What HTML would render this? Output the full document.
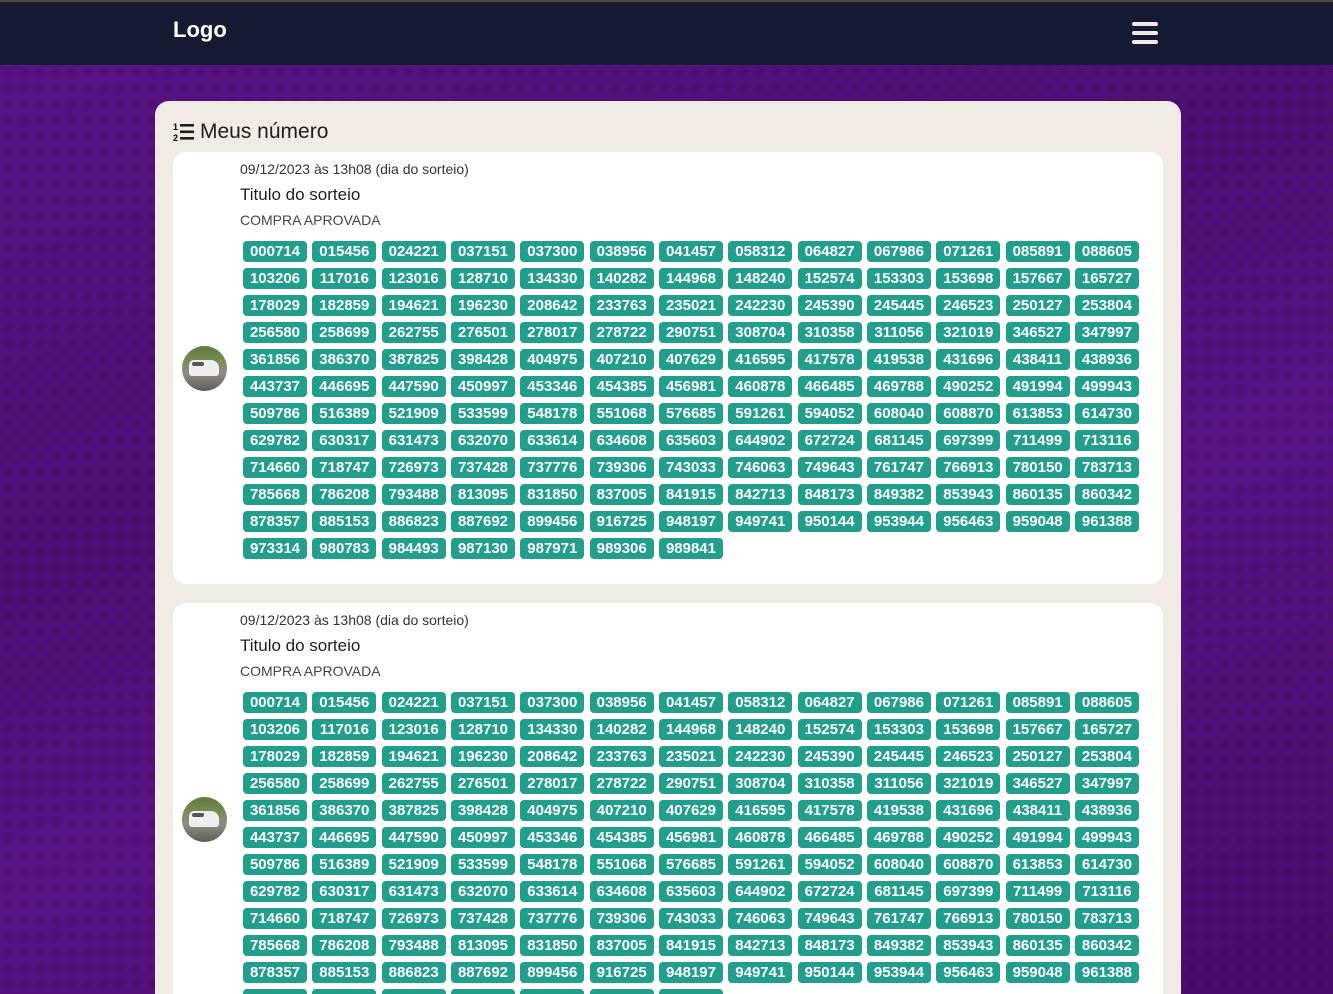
<!DOCTYPE html>
<html><head><meta charset="utf-8"><style>
*{box-sizing:border-box;margin:0;padding:0}
html,body{width:1333px;height:994px;overflow:hidden}
body{font-family:"Liberation Sans",sans-serif;background:#53107a;position:relative;
background-image:radial-gradient(circle,rgba(40,0,60,.14) 4px,transparent 5px),linear-gradient(160deg,#5a1385 0%,#4e0f74 40%,#5a1283 60%,#480c6a 100%);
background-size:16px 16px,100% 100%}
.top{position:absolute;left:0;top:0;width:1333px;height:2px;background:#4a4a4a}
nav{position:absolute;left:0;top:2px;width:1333px;height:63px;background:#161b33}
.logo{position:absolute;left:173px;top:15px;color:#fff;font-weight:bold;font-size:22px}
.burger{position:absolute;left:1132px;top:20px;width:26px}
.burger i{display:block;height:3.5px;background:#f0ebe5;border-radius:2px;margin-bottom:5.5px}
.main{position:absolute;left:155px;top:101px;width:1026px;height:1000px;background:#f0ebe5;border-radius:14px}
h2{position:absolute;left:18px;top:19px;font-weight:normal;font-size:21px;color:#1e1e1e;display:flex;align-items:center}
.card{position:absolute;left:18px;width:990px;height:432px;background:#fff;border-radius:13px}
.av{position:absolute;left:9px;top:194px;width:45px;height:45px;border-radius:50%;overflow:hidden;
background:linear-gradient(180deg,#5f7a3c 0%,#7c8c58 35%,#8d8d85 60%,#5e5e58 100%)}
.av b{position:absolute;left:7px;top:14px;width:30px;height:16px;background:#eee;border-radius:5px 8px 3px 3px}
.av s{position:absolute;left:10px;top:16px;width:12px;height:4px;background:#555;border-radius:2px}
.c{position:absolute;left:67px;top:8px}
.d{font-size:14px;line-height:18px;color:#333}
.t{font-size:17px;line-height:22px;color:#1e1e1e;margin-top:6px}
.s{font-size:14px;line-height:20px;color:#444;margin-top:4px}
.g{display:grid;grid-template-columns:repeat(13,64px);column-gap:5.33px;row-gap:6px;margin:11px 0 0 3px}
.g span{height:21px;background:#229e8d;color:#fff;border-radius:4px;font-weight:bold;font-size:15px;line-height:21px;text-align:center}
</style></head><body>
<div class="top"></div>
<nav><div class="logo">Logo</div><div class="burger"><i></i><i></i><i></i></div></nav>
<div class="main">
<h2><svg width="22" height="20" viewBox="0 0 22 20" style="margin-right:5px"><text x="0" y="8" font-size="9" font-weight="bold" font-family="Liberation Sans">1</text><text x="0" y="19" font-size="9" font-weight="bold" font-family="Liberation Sans">2</text><rect x="7" y="2" width="14" height="2.6" fill="#1e1e1e"/><rect x="7" y="8.5" width="14" height="2.6" fill="#1e1e1e"/><rect x="7" y="15" width="14" height="2.6" fill="#1e1e1e"/></svg>Meus número</h2>
<div class="card" style="top:51px">
<div class="av"><b></b><s></s></div>
<div class="c"><div class="d">09/12/2023 às 13h08 (dia do sorteio)</div><div class="t">Titulo do sorteio</div><div class="s">COMPRA APROVADA</div>
<div class="g"><span>000714</span><span>015456</span><span>024221</span><span>037151</span><span>037300</span><span>038956</span><span>041457</span><span>058312</span><span>064827</span><span>067986</span><span>071261</span><span>085891</span><span>088605</span><span>103206</span><span>117016</span><span>123016</span><span>128710</span><span>134330</span><span>140282</span><span>144968</span><span>148240</span><span>152574</span><span>153303</span><span>153698</span><span>157667</span><span>165727</span><span>178029</span><span>182859</span><span>194621</span><span>196230</span><span>208642</span><span>233763</span><span>235021</span><span>242230</span><span>245390</span><span>245445</span><span>246523</span><span>250127</span><span>253804</span><span>256580</span><span>258699</span><span>262755</span><span>276501</span><span>278017</span><span>278722</span><span>290751</span><span>308704</span><span>310358</span><span>311056</span><span>321019</span><span>346527</span><span>347997</span><span>361856</span><span>386370</span><span>387825</span><span>398428</span><span>404975</span><span>407210</span><span>407629</span><span>416595</span><span>417578</span><span>419538</span><span>431696</span><span>438411</span><span>438936</span><span>443737</span><span>446695</span><span>447590</span><span>450997</span><span>453346</span><span>454385</span><span>456981</span><span>460878</span><span>466485</span><span>469788</span><span>490252</span><span>491994</span><span>499943</span><span>509786</span><span>516389</span><span>521909</span><span>533599</span><span>548178</span><span>551068</span><span>576685</span><span>591261</span><span>594052</span><span>608040</span><span>608870</span><span>613853</span><span>614730</span><span>629782</span><span>630317</span><span>631473</span><span>632070</span><span>633614</span><span>634608</span><span>635603</span><span>644902</span><span>672724</span><span>681145</span><span>697399</span><span>711499</span><span>713116</span><span>714660</span><span>718747</span><span>726973</span><span>737428</span><span>737776</span><span>739306</span><span>743033</span><span>746063</span><span>749643</span><span>761747</span><span>766913</span><span>780150</span><span>783713</span><span>785668</span><span>786208</span><span>793488</span><span>813095</span><span>831850</span><span>837005</span><span>841915</span><span>842713</span><span>848173</span><span>849382</span><span>853943</span><span>860135</span><span>860342</span><span>878357</span><span>885153</span><span>886823</span><span>887692</span><span>899456</span><span>916725</span><span>948197</span><span>949741</span><span>950144</span><span>953944</span><span>956463</span><span>959048</span><span>961388</span><span>973314</span><span>980783</span><span>984493</span><span>987130</span><span>987971</span><span>989306</span><span>989841</span></div></div>
</div>
<div class="card" style="top:502px">
<div class="av"><b></b><s></s></div>
<div class="c"><div class="d">09/12/2023 às 13h08 (dia do sorteio)</div><div class="t">Titulo do sorteio</div><div class="s">COMPRA APROVADA</div>
<div class="g"><span>000714</span><span>015456</span><span>024221</span><span>037151</span><span>037300</span><span>038956</span><span>041457</span><span>058312</span><span>064827</span><span>067986</span><span>071261</span><span>085891</span><span>088605</span><span>103206</span><span>117016</span><span>123016</span><span>128710</span><span>134330</span><span>140282</span><span>144968</span><span>148240</span><span>152574</span><span>153303</span><span>153698</span><span>157667</span><span>165727</span><span>178029</span><span>182859</span><span>194621</span><span>196230</span><span>208642</span><span>233763</span><span>235021</span><span>242230</span><span>245390</span><span>245445</span><span>246523</span><span>250127</span><span>253804</span><span>256580</span><span>258699</span><span>262755</span><span>276501</span><span>278017</span><span>278722</span><span>290751</span><span>308704</span><span>310358</span><span>311056</span><span>321019</span><span>346527</span><span>347997</span><span>361856</span><span>386370</span><span>387825</span><span>398428</span><span>404975</span><span>407210</span><span>407629</span><span>416595</span><span>417578</span><span>419538</span><span>431696</span><span>438411</span><span>438936</span><span>443737</span><span>446695</span><span>447590</span><span>450997</span><span>453346</span><span>454385</span><span>456981</span><span>460878</span><span>466485</span><span>469788</span><span>490252</span><span>491994</span><span>499943</span><span>509786</span><span>516389</span><span>521909</span><span>533599</span><span>548178</span><span>551068</span><span>576685</span><span>591261</span><span>594052</span><span>608040</span><span>608870</span><span>613853</span><span>614730</span><span>629782</span><span>630317</span><span>631473</span><span>632070</span><span>633614</span><span>634608</span><span>635603</span><span>644902</span><span>672724</span><span>681145</span><span>697399</span><span>711499</span><span>713116</span><span>714660</span><span>718747</span><span>726973</span><span>737428</span><span>737776</span><span>739306</span><span>743033</span><span>746063</span><span>749643</span><span>761747</span><span>766913</span><span>780150</span><span>783713</span><span>785668</span><span>786208</span><span>793488</span><span>813095</span><span>831850</span><span>837005</span><span>841915</span><span>842713</span><span>848173</span><span>849382</span><span>853943</span><span>860135</span><span>860342</span><span>878357</span><span>885153</span><span>886823</span><span>887692</span><span>899456</span><span>916725</span><span>948197</span><span>949741</span><span>950144</span><span>953944</span><span>956463</span><span>959048</span><span>961388</span><span>973314</span><span>980783</span><span>984493</span><span>987130</span><span>987971</span><span>989306</span><span>989841</span></div></div>
</div>
</div>
</body></html>
